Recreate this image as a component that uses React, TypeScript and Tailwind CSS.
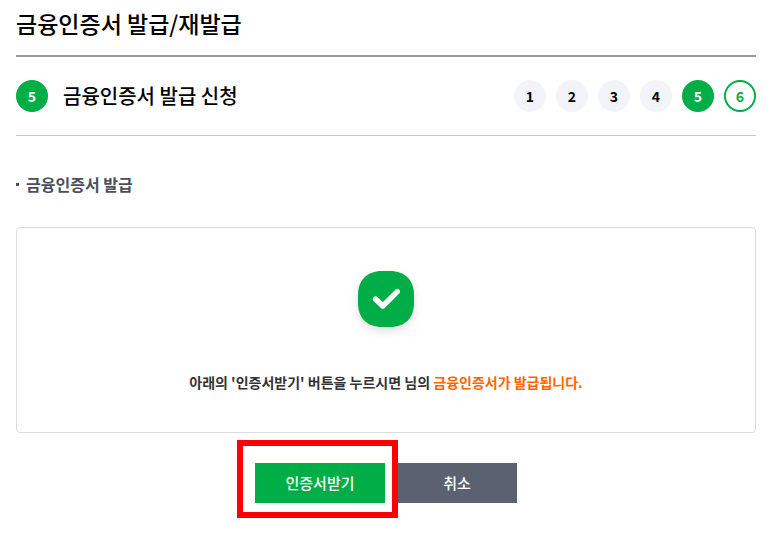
import clsx from "clsx";

const STEPS = [1, 2, 3, 4, 5, 6];
const CURRENT_STEP = 5;

function StepBadge({ step }: { step: number }) {
  return (
    <li
      aria-current={step === CURRENT_STEP ? "step" : undefined}
      className={clsx(
        "flex size-8 items-center justify-center rounded-full text-sm font-bold",
        step < CURRENT_STEP && "bg-[#f3f4f9] text-black",
        step === CURRENT_STEP && "bg-[#00ad46] text-white",
        step > CURRENT_STEP &&
          "border-2 border-[#00ad46] bg-white text-[#00ad46]"
      )}
    >
      {step}
    </li>
  );
}

function CheckIcon() {
  return (
    <svg
      viewBox="0 0 56 56"
      className="size-14 drop-shadow-[0_4px_4px_rgba(0,0,0,0.12)]"
      aria-hidden="true"
    >
      <path
        d="M24 0h8c15 0 24 9 24 24v8c0 15-9 24-24 24h-8C9 56 0 47 0 32v-8C0 9 9 0 24 0Z"
        fill="#00ad46"
      />
      <path
        d="M17.5 28 24.8 35 39.3 20.7"
        fill="none"
        stroke="#fff"
        strokeWidth="5.4"
        strokeLinecap="round"
        strokeLinejoin="round"
      />
    </svg>
  );
}

export default function App() {
  return (
    <main className="bg-white pt-1.5 pr-[26px] pb-5 pl-4 font-['Noto_Sans_CJK_KR',sans-serif] text-black">
      <h1 className="border-b-2 border-[#999] pb-3.5 text-[23px] leading-[35px] font-medium">
        금융인증서 발급/재발급
      </h1>

      <div className="flex items-center justify-between border-b border-[#c6c6cf] pt-[23px] pb-[23px]">
        <div className="flex items-center gap-[15px]">
          <span className="flex size-8 items-center justify-center rounded-full bg-[#00ad46] text-sm font-bold text-white">
            {CURRENT_STEP}
          </span>
          <h2 className="text-xl leading-8 font-medium">금융인증서 발급 신청</h2>
        </div>
        <ol className="flex gap-2.5">
          {STEPS.map((step) => (
            <StepBadge key={step} step={step} />
          ))}
        </ol>
      </div>

      <h3 className="mt-9 flex items-center gap-[7px] text-base leading-6 font-bold text-[#4c4e5e]">
        <span className="size-[3px] bg-[#4c4e5e]" />
        금융인증서 발급
      </h3>

      <section className="mt-[31px] flex flex-col items-center rounded border border-[#dcdcdc] pt-[43px] pb-[39px]">
        <CheckIcon />
        <p className="mt-[45px] text-sm leading-[21px] font-bold text-[#333]">
          아래의 '인증서받기' 버튼을 누르시면 님의{" "}
          <strong className="font-bold text-[#ff6600]">
            금융인증서가 발급됩니다.
          </strong>
        </p>
      </section>

      <div className="mt-[30px] flex justify-center gap-3">
        <div className="relative">
          <button
            type="button"
            className="h-10 w-[130px] bg-[#00ad46] text-[15px] font-medium text-white"
          >
            인증서받기
          </button>
          {/* highlight frame around the primary action */}
          <span className="pointer-events-none absolute -top-[23px] -right-[13px] -bottom-[15px] -left-[18px] z-10 border-[6px] border-[#f00]" />
        </div>
        <button
          type="button"
          className="h-10 w-[120px] bg-[#5b6171] text-[15px] font-medium text-white"
        >
          취소
        </button>
      </div>
    </main>
  );
}
